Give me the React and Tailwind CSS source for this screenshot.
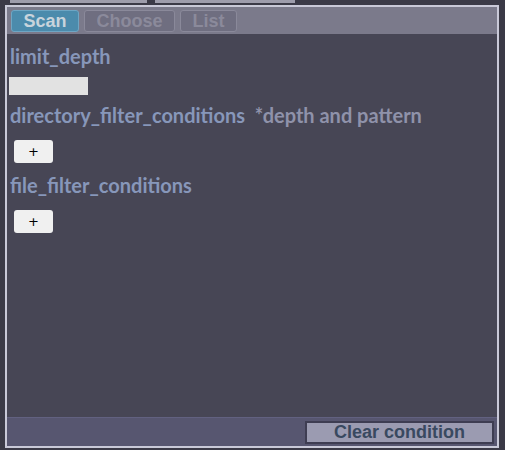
export default function App() {
  return (
    <div className="w-[505px] h-[450px] bg-[#3b3a47] relative overflow-hidden" style={{ fontFamily: "Lato, 'Noto Sans', sans-serif" }}>
      {/* edges of the controls sitting above the panel */}
      <div className="flex h-[3px] pl-[10px] gap-[8px]">
        <div className="w-[137px] bg-[#9e9dac]" />
        <div className="w-[140px] bg-[#9e9dac]" />
      </div>
      <div className="absolute left-[5px] top-[5px] w-[494px] h-[443px] border-2 border-[#c9c9d8] bg-[#474655] flex flex-col">
        {/* tabs */}
        <div className="h-[27px] bg-[#7b7a8b] flex items-center gap-[5px] px-[4px]">
          <button className="h-[22px] w-[68px] rounded-[3px] border border-[#6ea6c4] bg-[#4b8bac] text-[#c8d4dc] font-bold text-[18px] leading-none" style={{ fontFamily: "'Liberation Sans', Arial, sans-serif" }}>Scan</button>
          <button className="h-[22px] w-[91px] rounded-[3px] border border-[#8a899a] bg-[#6f6e80] text-[#8b8a9b] font-bold text-[18px] leading-none" style={{ fontFamily: "'Liberation Sans', Arial, sans-serif" }}>Choose</button>
          <button className="h-[22px] w-[57px] rounded-[3px] border border-[#8a899a] bg-[#6f6e80] text-[#8b8a9b] font-bold text-[18px] leading-none" style={{ fontFamily: "'Liberation Sans', Arial, sans-serif" }}>List</button>
        </div>
        {/* form body */}
        <div className="flex-1 flex flex-col px-[2px] pt-[10px] text-[#8797ba] font-bold text-[20px]">
          <div className="h-[24px] leading-[24px] pl-[1px]">limit_depth</div>
          <div className="h-[18px] w-[79px] bg-[#e2e2e2] mt-[9px] ml-[0px]" />
          <div className="h-[24px] leading-[24px] mt-[8px] pl-[1px] whitespace-pre">directory_filter_conditions  <span className="text-[#8f92aa]">*depth and pattern</span></div>
          <button className="mt-[13px] ml-[5px] w-[39px] h-[23px] rounded-[3px] bg-[#f0f0f0] text-black text-[13px] font-normal leading-none" style={{ fontFamily: "'DejaVu Sans', sans-serif" }}>+</button>
          <div className="h-[24px] leading-[24px] mt-[10px] pl-[1px]">file_filter_conditions</div>
          <button className="mt-[13px] ml-[5px] w-[39px] h-[23px] rounded-[3px] bg-[#f0f0f0] text-black text-[13px] font-normal leading-none" style={{ fontFamily: "'DejaVu Sans', sans-serif" }}>+</button>
        </div>
        {/* footer */}
        <div className="h-[29px] bg-[#575670] border-t border-[#626180] flex items-center justify-end pr-[3px]">
          <button className="w-[189px] h-[23px] bg-[#9b9bb1] border-2 border-[#3e3d52] text-[#394960] font-bold text-[18px] leading-none" style={{ fontFamily: "'Liberation Sans', Arial, sans-serif" }}>Clear condition</button>
        </div>
      </div>
    </div>
  );
}
